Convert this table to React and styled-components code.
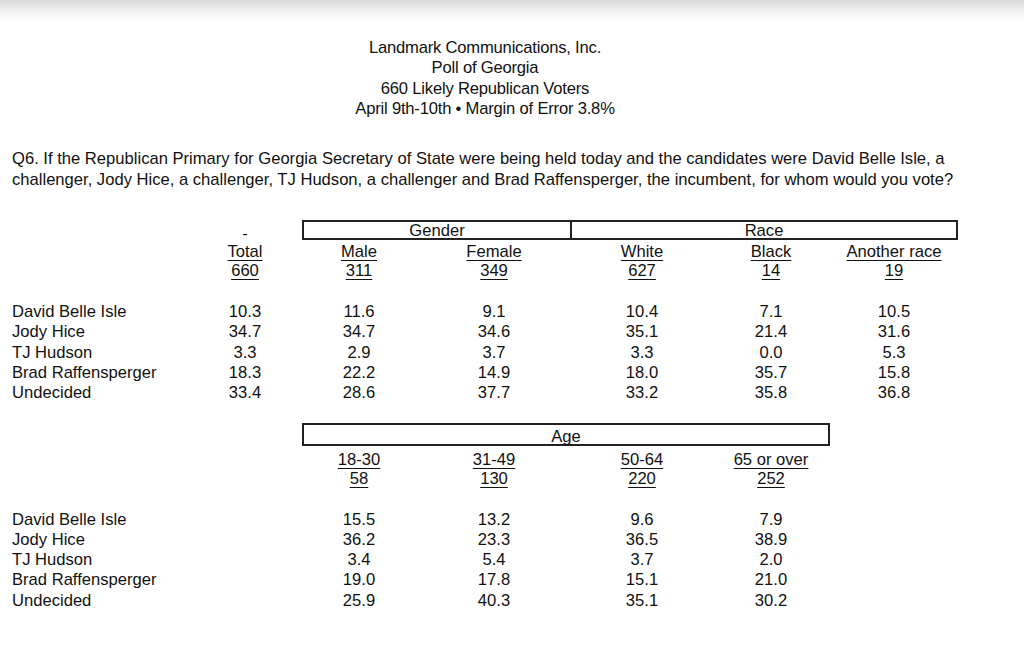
import React from 'react';
import styled, { createGlobalStyle } from 'styled-components';

const GlobalStyle = createGlobalStyle`
    html, body {
        margin: 0;
        padding: 0;
        background: #fff;
    }
    body {
        font-family: "Liberation Sans", Arial, sans-serif;
        color: #111;
    }
`;

const Page = styled.div`
    width: 1024px;
    height: 669px;
    overflow: hidden;
    background: linear-gradient(to bottom, #d9d9d9 0px, #f3f3f3 12px, #fff 22px);
    padding: 38px 0 0 12px;
    box-sizing: border-box;
`;

const Title = styled.div`
    width: 946px;
    text-align: center;
    font-size: 16.6px;
    line-height: 20.4px;
    letter-spacing: -0.2px;
    color: #111;
`;

const Question = styled.p`
    margin: 28px 0 0;
    font-size: 16.6px;
    line-height: 21px;
    width: 1010px;
    white-space: nowrap;
`;

// 표 전체 - 칸 너비는 두 표에서 똑같이 씀
const Table = styled.div`
    display: grid;
    grid-template-columns: 176px 114px 114px 156px 140px 118px 128px;
    font-size: 16.6px;
    margin-top: ${p => p.top}px;
`;

const Box = styled.div`
    grid-column: ${p => p.span};
    grid-row: 1;
    height: ${p => p.h}px;
    border: 2px solid #222;
    border-left-width: ${p => (p.joined ? 0 : 2)}px;
    box-sizing: border-box;
    text-align: center;
    line-height: ${p => p.h - 4}px;
    padding-top: ${p => p.drop}px;
`;

const Dash = styled.div`
    grid-column: 2;
    grid-row: 1;
    text-align: center;
    line-height: 20px;
    height: 20px;
    transform: translateY(4px);
`;

const Cell = styled.div`
    text-align: ${p => (p.label ? 'left' : 'center')};
    line-height: ${p => p.lh || 19}px;
    text-decoration: ${p => (p.u ? 'underline' : 'none')};
    text-decoration-thickness: 1.3px;
    text-underline-offset: 2.5px;
    white-space: nowrap;
`;

const Gap = styled.div`
    grid-column: 1 / -1;
    height: ${p => p.h}px;
`;

const rows = ['David Belle Isle', 'Jody Hice', 'TJ Hudson', 'Brad Raffensperger', 'Undecided'];

const top = {
    cols: [['Total', '660'], ['Male', '311'], ['Female', '349'], ['White', '627'], ['Black', '14'], ['Another race', '19']],
    data: [
        ['10.3', '11.6', '9.1', '10.4', '7.1', '10.5'],
        ['34.7', '34.7', '34.6', '35.1', '21.4', '31.6'],
        ['3.3', '2.9', '3.7', '3.3', '0.0', '5.3'],
        ['18.3', '22.2', '14.9', '18.0', '35.7', '15.8'],
        ['33.4', '28.6', '37.7', '33.2', '35.8', '36.8'],
    ],
};

const age = {
    cols: [null, ['18-30', '58'], ['31-49', '130'], ['50-64', '220'], ['65 or over', '252'], null],
    data: [
        ['', '15.5', '13.2', '9.6', '7.9', ''],
        ['', '36.2', '23.3', '36.5', '38.9', ''],
        ['', '3.4', '5.4', '3.7', '2.0', ''],
        ['', '19.0', '17.8', '15.1', '21.0', ''],
        ['', '25.9', '40.3', '35.1', '30.2', ''],
    ],
};

const Banner = ({ spec, boxes, top: mt, headGap, dataGap, dash }) => (
    <Table top={mt}>
        {dash && <Dash>-</Dash>}
        {boxes.map(b => (
            <Box key={b.label} span={b.span} h={b.h} drop={b.drop} joined={b.joined}>{b.label}</Box>
        ))}
        <Gap h={headGap} />
        <Cell />
        {spec.cols.map((c, i) => <Cell key={'h' + i} u={!!c}>{c ? c[0] : ''}</Cell>)}
        <Cell />
        {spec.cols.map((c, i) => <Cell key={'n' + i} u={!!c}>{c ? c[1] : ''}</Cell>)}
        <Gap h={dataGap} />
        {spec.data.map((r, ri) => (
            <React.Fragment key={ri}>
                <Cell label lh={20.25}>{rows[ri]}</Cell>
                {r.map((v, ci) => <Cell key={ci} lh={20.25}>{v}</Cell>)}
            </React.Fragment>
        ))}
    </Table>
);

const App = () => (
    <Page>
        <GlobalStyle />
        <Title>
            <div>Landmark Communications, Inc.</div>
            <div>Poll of Georgia</div>
            <div>660 Likely Republican Voters</div>
            <div>April 9th-10th • Margin of Error 3.8%</div>
        </Title>
        <Question>
            Q6. If the Republican Primary for Georgia Secretary of State were being held today and the candidates were David Belle Isle, a
            <br />
            challenger, Jody Hice, a challenger, TJ Hudson, a challenger and Brad Raffensperger, the incumbent, for whom would you vote?
        </Question>
        <Banner
            spec={top}
            top={30.5}
            headGap={1.5}
            dataGap={22.4}
            dash
            boxes={[
                { label: 'Gender', span: '3 / 5', h: 20, drop: 1 },
                { label: 'Race', span: '5 / 8', h: 20, drop: 1, joined: true },
            ]}
        />
        <Banner
            spec={age}
            top={19.5}
            headGap={4.5}
            dataGap={21.4}
            boxes={[{ label: 'Age', span: '3 / 7', h: 23, drop: 2 }]}
        />
    </Page>
);

export default App;
